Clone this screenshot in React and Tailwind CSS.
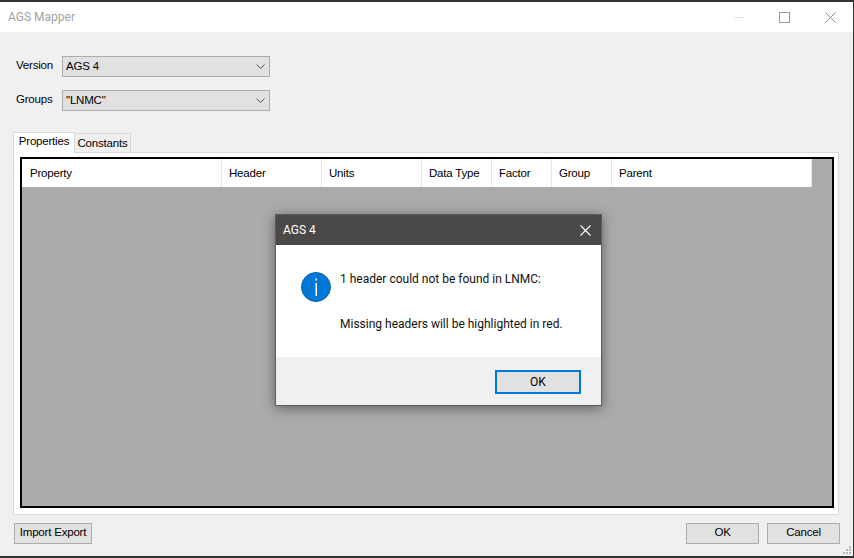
const columns = [
  { label: "Property", width: "w-[200px]", pad: "pl-[8px]" },
  { label: "Header", width: "w-[100px]", pad: "pl-[7px]" },
  { label: "Units", width: "w-[100px]", pad: "pl-[7px]" },
  { label: "Data Type", width: "w-[70px]", pad: "pl-[7px]" },
  { label: "Factor", width: "w-[60px]", pad: "pl-[7px]" },
  { label: "Group", width: "w-[60px]", pad: "pl-[7px]" },
  { label: "Parent", width: "w-[200px]", pad: "pl-[7px]" },
];

const formText = "font-['Liberation_Sans',sans-serif] text-[11.5px] leading-[16px] tracking-[-0.2px]";

const Combo = ({ label, value, className = "" }) => (
  <div className={`flex items-center ${className}`}>
    <span className={`w-[46px] -mt-[3px] ${formText}`}>{label}</span>
    <div className="flex h-[21px] w-[208px] items-center justify-between border border-[#adadad] bg-[#e1e1e1] pl-[3px] pr-[4px]">
      <span className={`-mt-[1px] ${formText}`}>{value}</span>
      <svg width="9" height="5" viewBox="0 0 9 5" fill="none" stroke="#505050" strokeWidth="1">
        <path d="M0.5 0.5 4.5 4.5 8.5 0.5" />
      </svg>
    </div>
  </div>
);

const Button = ({ children, className = "" }) => (
  <button className={`flex h-[21px] items-center justify-center whitespace-nowrap border border-[#adadad] bg-[#e1e1e1] pb-[3px] ${formText} ${className}`}>
    {children}
  </button>
);

const Grip = () => (
  <svg width="10" height="10" viewBox="0 0 10 10" className="absolute bottom-[1px] right-[1px]">
    <g fill="#b8b8b8">
      <rect x="7" y="1" width="2" height="2" />
      <rect x="4" y="4" width="2" height="2" />
      <rect x="7" y="4" width="2" height="2" />
      <rect x="1" y="7" width="2" height="2" />
      <rect x="4" y="7" width="2" height="2" />
      <rect x="7" y="7" width="2" height="2" />
    </g>
  </svg>
);

const InfoDialog = () => (
  <div className="absolute left-[275px] top-[212px] flex h-[192px] w-[327px] flex-col border border-[#5c5c5c] shadow-[0_2px_12px_rgba(0,0,0,0.45)]">
    <div className="flex h-[30px] shrink-0 items-center justify-between bg-[#4a4947] pl-[7px] pr-[10px] text-white">
      <span className="text-[12px] leading-[16px]">AGS 4</span>
      <svg width="11" height="11" viewBox="0 0 11 11" fill="none" stroke="#ffffff" strokeWidth="1.1">
        <path d="M0.5 0.5 10.5 10.5M10.5 0.5 0.5 10.5" />
      </svg>
    </div>
    <div className="flex h-[112px] shrink-0 bg-white pl-[25px] pt-[27px]">
      <svg width="30" height="30" viewBox="0 0 30 30" className="shrink-0">
        <circle cx="15" cy="15" r="14.5" fill="#0078d7" stroke="#0d5fa8" strokeWidth="1" />
        <rect x="14.5" y="11" width="1.5" height="13" fill="#ffffff" />
        <rect x="14.5" y="6.5" width="1.5" height="2" fill="#ffffff" />
      </svg>
      <div className="ml-[9px] -mt-[1px] text-[12px] leading-[16px] text-[#111111]">
        <p>1 header could not be found in LNMC:</p>
        <p className="mt-[29px]">Missing headers will be highlighted in red.</p>
      </div>
    </div>
    <div className="flex flex-1 items-start justify-end bg-[#f0f0f0] pr-[20px] pt-[13px]">
      <button className="flex h-[24px] w-[86px] items-center justify-center border-2 border-[#0078d7] bg-[#e1e1e1] text-[12px] leading-[16px]">
        OK
      </button>
    </div>
  </div>
);

export default function App() {
  return (
    <div className="relative flex h-[558px] w-[854px] flex-col overflow-hidden border-t-2 border-b-2 border-r border-[#333333] bg-[#f0f0f0] font-['Roboto','Liberation_Sans',sans-serif] text-black">
      <div className="flex h-[30px] shrink-0 items-center justify-between bg-white pl-[8px] pr-[17px]">
        <span className="text-[12px] leading-[16px] text-[#a3a3a3]">AGS Mapper</span>
        <div className="flex items-center">
          <div className="h-px w-[10px] bg-[#e4e4e4]" />
          <div className="ml-[35px] h-[11px] w-[11px] border border-[#999999]" />
          <svg width="11" height="11" viewBox="0 0 11 11" fill="none" stroke="#8c8c8c" strokeWidth="1" className="ml-[35px]">
            <path d="M0.5 0.5 10.5 10.5M10.5 0.5 0.5 10.5" />
          </svg>
        </div>
      </div>

      <div className="flex flex-1 flex-col pl-[13px] pr-[13px]">
        <div className="pl-[3px] pt-[24px]">
          <Combo label="Version" value="AGS 4" />
          <Combo label="Groups" value={'"LNMC"'} className="mt-[13px]" />
        </div>

        <div className="mt-[20px] flex h-[21px] items-end">
          <div className={`relative z-10 -mb-px flex h-[21px] w-[62px] justify-center border border-b-0 border-[#d9d9d9] bg-white ${formText}`}>
            Properties
          </div>
          <div className={`flex h-[19px] w-[56px] justify-center border border-b-0 border-l-0 border-[#d9d9d9] bg-[#f0f0f0] pt-[1px] ${formText}`}>
            Constants
          </div>
        </div>

        <div className="h-[363px] w-[826px] border border-[#d9d9d9] bg-white pb-[6px] pl-[6px] pr-[4px] pt-[4px]">
          <div className="flex h-full flex-col border-2 border-black bg-[#ababab]">
            <div className="flex h-[28px] w-[790px] bg-white">
              {columns.map((col) => (
                <div key={col.label} className={`flex items-center border-r border-[#e5e5e5] ${col.pad} ${formText} ${col.width}`}>
                  {col.label}
                </div>
              ))}
            </div>
          </div>
        </div>

        <div className="mt-[8px] flex items-start justify-between pl-px">
          <Button className="w-[78px]">Import Export</Button>
          <div className="flex gap-[8px]">
            <Button className="w-[73px]">OK</Button>
            <Button className="w-[73px]">Cancel</Button>
          </div>
        </div>
      </div>

      <Grip />
      <InfoDialog />
    </div>
  );
}
